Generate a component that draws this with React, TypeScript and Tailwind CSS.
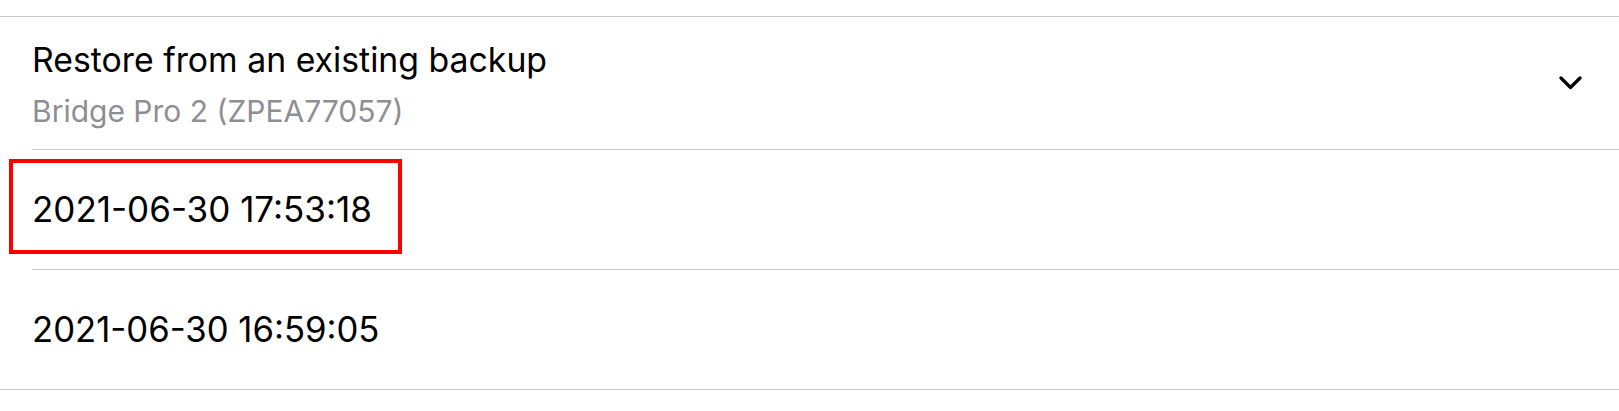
export default function App() {
  return (
    <div
      className="w-[1619px] h-[411px] bg-white text-black pt-4"
      style={{ fontFamily: "Inter, 'Noto Sans', sans-serif" }}
    >
      <div className="border-t border-b border-[#c8c7cc]">
        {/* header */}
        <div className="ml-8 h-[133px] border-b border-[#c8c7cc] flex items-center justify-between pr-[37px]">
          <div className="flex flex-col pt-[3px]">
            <span className="text-[33.8px] leading-[44px]">Restore from an existing backup</span>
            <span className="text-[30px] leading-[40px] mt-[9px] text-[#8e8e93]">Bridge Pro 2 (ZPEA77057)</span>
          </div>
          <svg width="23" height="14" viewBox="0 0 23 14" fill="none">
            <polyline
              points="2,2 11.5,11.5 21,2"
              stroke="#000"
              strokeWidth="3.2"
              strokeLinecap="round"
              strokeLinejoin="round"
            />
          </svg>
        </div>

        {/* backups */}
        <div className="ml-8 h-[120px] border-b border-[#c8c7cc] flex items-center relative">
          <span className="text-[35px]">2021-06-30 17:53:18</span>
          <div className="absolute left-[-23px] top-[9px] w-[393px] h-[95px] border-4 border-[#ff0000]" />
        </div>
        <div className="ml-8 h-[119px] flex items-center">
          <span className="text-[34.7px]">2021-06-30 16:59:05</span>
        </div>
      </div>
    </div>
  );
}
